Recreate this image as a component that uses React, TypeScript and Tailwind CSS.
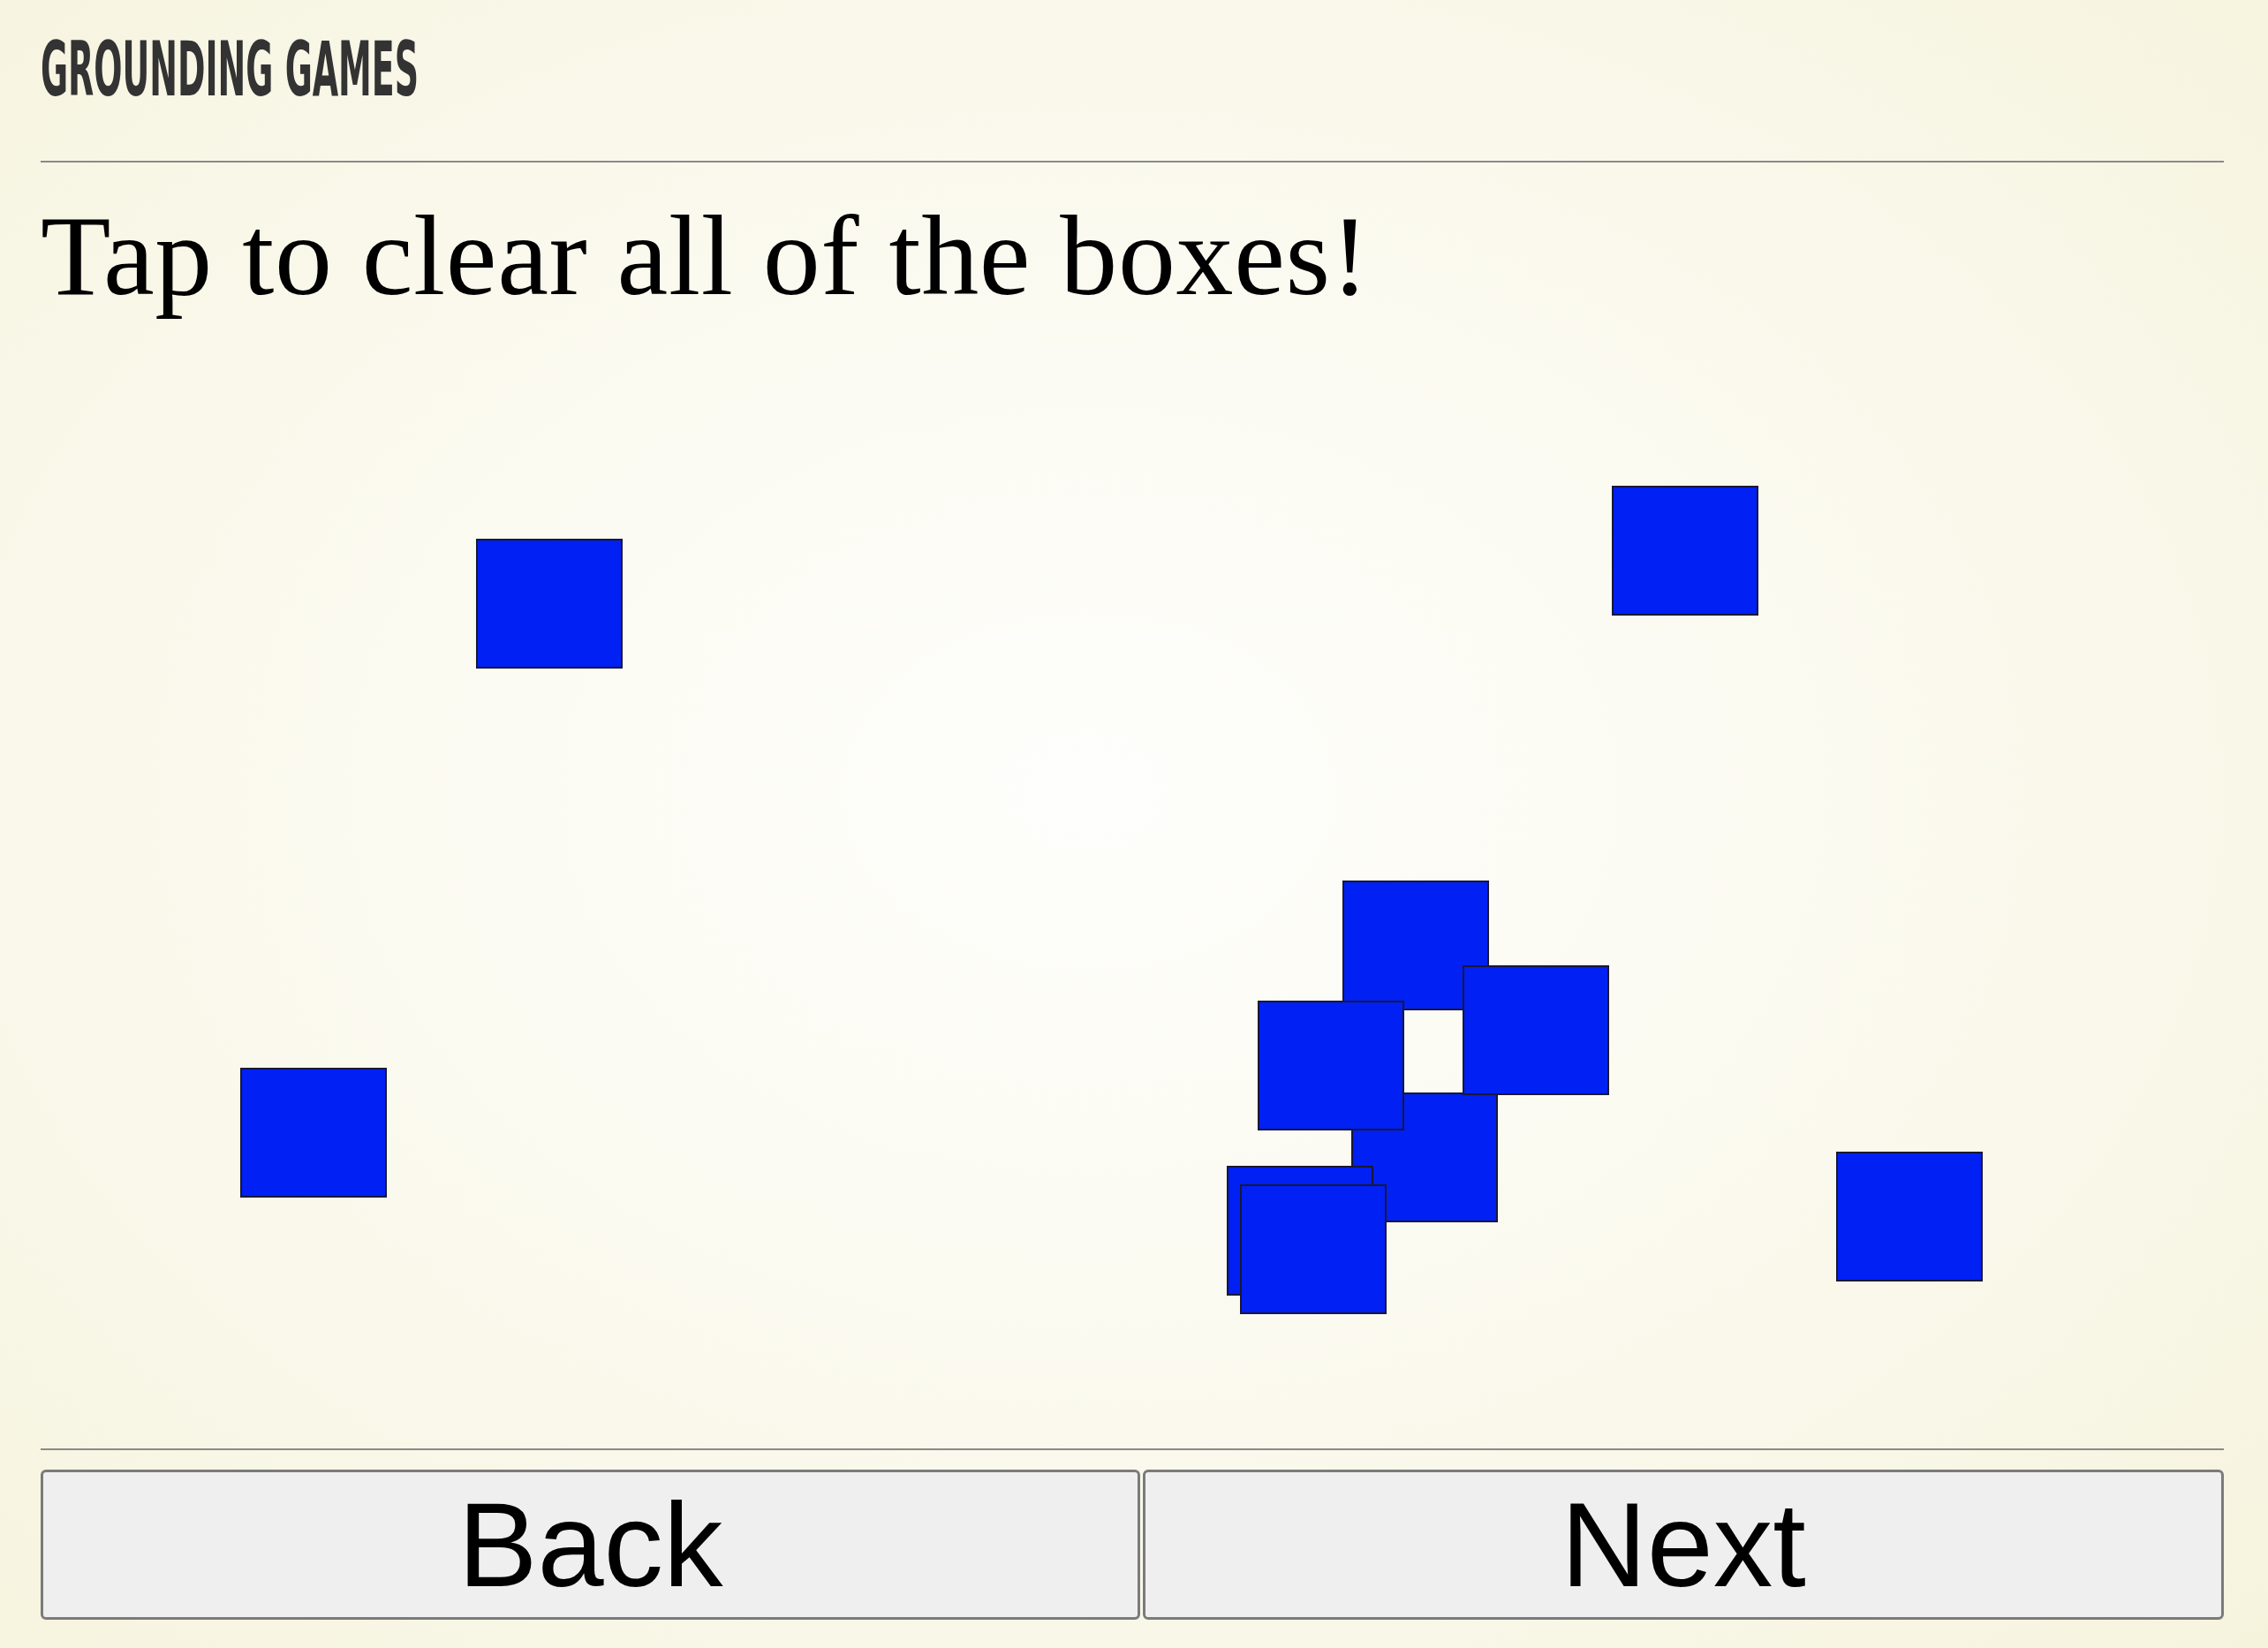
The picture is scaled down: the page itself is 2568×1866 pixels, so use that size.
import { useState } from 'react'

type Box = { id: number; x: number; y: number }

// positions inside the play area, listed in stacking order
const BOXES: Box[] = [
  { id: 1, x: 493, y: 256 },
  { id: 2, x: 1779, y: 196 },
  { id: 3, x: 226, y: 855 },
  { id: 10, x: 2033, y: 950 },
  { id: 4, x: 1474, y: 643 },
  { id: 7, x: 1484, y: 883 },
  { id: 5, x: 1610, y: 739 },
  { id: 6, x: 1378, y: 779 },
  { id: 8, x: 1343, y: 966 },
  { id: 9, x: 1358, y: 987 },
]

export default function App() {
  const [boxes, setBoxes] = useState(BOXES)

  return (
    <div className="flex h-screen w-full flex-col bg-[radial-gradient(ellipse_at_48%_48%,#fefefc_0%,#fbfaf0_45%,#f6f3dd_100%)] pl-[46px] pr-[50px]">
      <header className="h-[184px] shrink-0 border-b-2 border-[#8a8a8a]">
        <h1 className="inline-block origin-left scale-x-[0.49] pt-[35px] font-['DejaVu_Sans_Condensed','DejaVu_Sans',sans-serif] text-[86px] font-bold leading-none whitespace-nowrap text-[#333333]">
          GROUNDING GAMES
        </h1>
      </header>

      <h2 className="mt-[40px] shrink-0 font-['Liberation_Serif','Times_New_Roman',serif] text-[130px] leading-none tracking-[0.65px] whitespace-nowrap text-black">
        Tap to clear all of the boxes!
      </h2>

      <div className="relative flex-1">
        {boxes.map((box) => (
          <button
            key={box.id}
            onClick={() => setBoxes((prev) => prev.filter((b) => b.id !== box.id))}
            className="absolute h-[147px] w-[166px] border-2 border-[#181834] bg-[#0020f4]"
            style={{ left: box.x, top: box.y }}
          />
        ))}
      </div>

      <footer className="flex shrink-0 gap-[3px] border-t-2 border-[#8a8a8a] pt-[22px] pb-[32px]">
        <button className="h-[170px] w-[1245px] rounded-[6px] border-[3px] border-[#7b7b7b] bg-[#efefef] font-['Liberation_Sans',Arial,sans-serif] text-[135px] leading-none text-black">
          Back
        </button>
        <button className="h-[170px] flex-1 rounded-[6px] border-[3px] border-[#7b7b7b] bg-[#efefef] font-['Liberation_Sans',Arial,sans-serif] text-[135px] leading-none text-black">
          Next
        </button>
      </footer>
    </div>
  )
}
